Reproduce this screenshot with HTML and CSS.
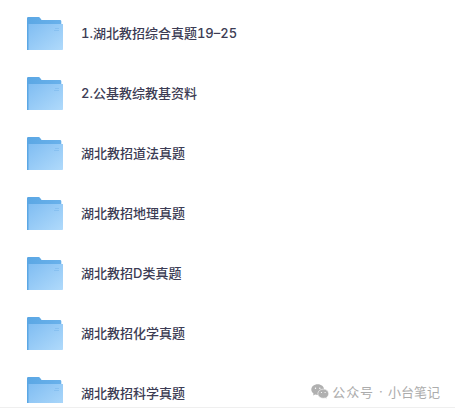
FILE: index.html
```html
<!DOCTYPE html>
<html lang="zh-CN">
<head>
<meta charset="UTF-8">
<meta name="viewport" content="width=device-width, initial-scale=1.0">
<title>文件列表</title>
<link rel="stylesheet" href="styles.css">
</head>
<body>
<svg class="defs" width="0" height="0">
  <defs>
    <linearGradient id="back" x1="0" y1="0" x2="1" y2="0">
      <stop offset="0" stop-color="#5ba7e4"/>
      <stop offset="1" stop-color="#69b1eb"/>
    </linearGradient>
    <linearGradient id="front" x1="0" y1="0" x2="1" y2="1">
      <stop offset="0" stop-color="#80bdf2"/>
      <stop offset="1" stop-color="#b0dafb"/>
    </linearGradient>
    <symbol id="folder" viewBox="0 0 36 34">
      <path d="M0 1.2Q0 0 1.2 0H11.6Q12.5 0 13 .8L14.6 3H33Q34.3 3 34.3 4.3V33H0Z" fill="url(#back)"/>
      <path d="M1.5 7H36V32.2Q36 33 35.2 33H1.5Z" fill="url(#front)"/>
      <path d="M28 11.5H32M27 13.5H32" stroke="#7ab8ec" stroke-width=".6"/>
    </symbol>
  </defs>
</svg>

<div class="file-list">
  <div class="file-row">
    <svg class="folder"><use href="#folder"/></svg>
    <span class="name">1.湖北教招综合真题19–25</span>
  </div>
  <div class="file-row">
    <svg class="folder"><use href="#folder"/></svg>
    <span class="name">2.公基教综教基资料</span>
  </div>
  <div class="file-row">
    <svg class="folder"><use href="#folder"/></svg>
    <span class="name">湖北教招道法真题</span>
  </div>
  <div class="file-row">
    <svg class="folder"><use href="#folder"/></svg>
    <span class="name">湖北教招地理真题</span>
  </div>
  <div class="file-row">
    <svg class="folder"><use href="#folder"/></svg>
    <span class="name">湖北教招D类真题</span>
  </div>
  <div class="file-row">
    <svg class="folder"><use href="#folder"/></svg>
    <span class="name">湖北教招化学真题</span>
  </div>
  <div class="file-row">
    <svg class="folder"><use href="#folder"/></svg>
    <span class="name">湖北教招科学真题</span>
  </div>
</div>

<div class="watermark">
  <svg class="wechat" viewBox="0 0 18 15">
    <path class="bubble" d="M6.7.3C3 .3.3 2.6.3 5.6c0 1.7.9 3.2 2.3 4.1L2 11.6l2.2-1.1c.8.2 1.6.4 2.5.4 3.6 0 6.4-2.4 6.4-5.3S10.3.3 6.7.3Z"/>
    <path class="bubble front" d="M12.3 5.1c-3.1 0-5.5 2-5.5 4.6s2.4 4.6 5.5 4.6c.7 0 1.4-.1 2-.3l1.8.9-.5-1.6c1.3-.8 2.1-2.1 2.1-3.6 0-2.6-2.4-4.6-5.4-4.6Z"/>
    <circle cx="4.5" cy="4.2" r=".7"/>
    <circle cx="8.8" cy="4.2" r=".7"/>
    <circle cx="10.5" cy="8.5" r=".6"/>
    <circle cx="14.1" cy="8.5" r=".6"/>
  </svg>
  <span class="source">公众号</span>
  <span class="dot">·</span>
  <span class="account">小台笔记</span>
</div>
</body>
</html>
```
FILE: styles.css
```css
* {
    box-sizing: border-box;
}
body {
    margin: 0;
    height: 411px;
    overflow: hidden;
    background-color: #fff;
    font-family: Inter, "Noto Sans CJK SC", sans-serif;
}
.defs {
    position: absolute;
}
.file-list {
    height: 403px;
    padding-top: 4px;
    overflow: hidden;
}
.file-row {
    display: flex;
    align-items: center;
    height: 60px;
    padding-left: 27px;
}
.folder {
    width: 36px;
    height: 34px;
    margin-right: 18px;
}
.name {
    padding-bottom: 2px;
    font-size: 13px;
    font-weight: 500;
    line-height: 20px;
    color: #3c3c54;
    white-space: nowrap;
    font-variant-numeric: tabular-nums;
}
body::after {
    content: "";
    display: block;
    height: 1px;
    margin-top: 4px;
    background-color: #efefef;
}
/* account mark laid over the last row */
.watermark {
    position: absolute;
    right: 15px;
    top: 381px;
    display: flex;
    align-items: center;
    height: 20px;
    font-size: 13px;
    color: #acacac;
    white-space: nowrap;
}
.wechat {
    width: 18px;
    height: 15px;
    margin-right: 3px;
}
.bubble {
    fill: #b0b0b0;
}
.bubble.front {
    stroke: #fff;
    stroke-width: .6;
}
.wechat circle {
    fill: #fff;
}
.source {
    letter-spacing: .9px;
}
.dot {
    width: 14px;
    text-align: center;
}
```
